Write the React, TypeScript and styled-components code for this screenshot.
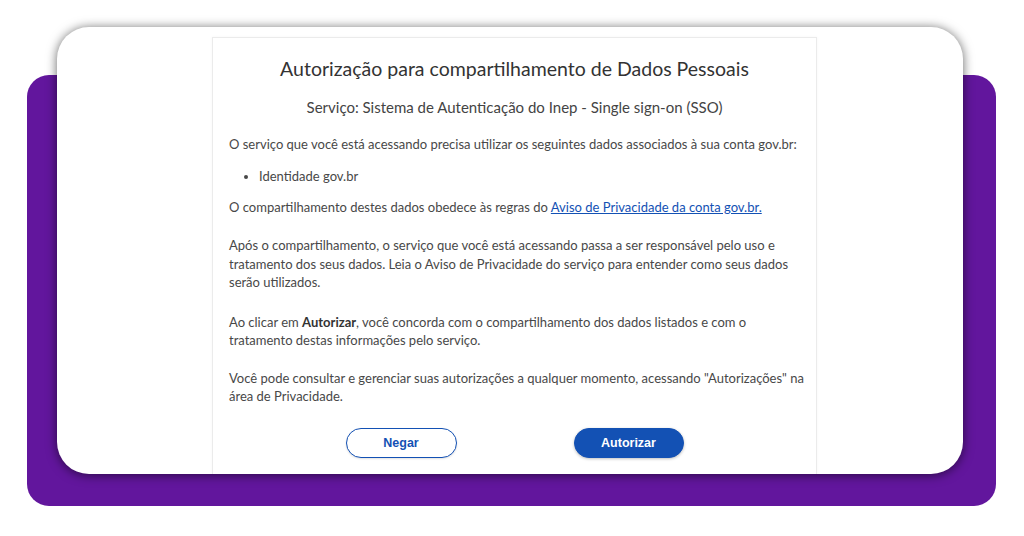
import React from "react";
import styled, { createGlobalStyle } from "styled-components";

const Global = createGlobalStyle`
  html, body { margin: 0; padding: 0; background: #ffffff; }
  body { font-family: "Lato", "Liberation Sans", sans-serif; }
  * { box-sizing: border-box; }
`;

const Frame = styled.div`
  position: relative;
  width: 1024px;
  height: 536px;
  padding: 27px 61px 0 57px;
  background: #ffffff;
  overflow: hidden;

  &::before {
    content: "";
    position: absolute;
    left: 27px;
    top: 75px;
    right: 28px;
    bottom: 30px;
    border-radius: 22px;
    background: #62169d;
  }
`;

const Card = styled.div`
  position: relative;
  z-index: 1;
  height: 447px;
  background: #ffffff;
  border-radius: 32px;
  overflow: hidden;
  box-shadow: 0 1px 11px rgba(0, 0, 0, 0.6);
  padding: 10px 0 0 155px;
`;

const Panel = styled.section`
  width: 605px;
  height: 100%;
  border: 1px solid #ebebeb;
  border-bottom: none;
  padding: 17px 10px 0 16px;
  font-family: "Lato", "Liberation Sans", sans-serif;
  color: #333333;
  box-shadow: 0 0 3px rgba(0, 0, 0, 0.04);
`;

const Title = styled.h1`
  margin: 0;
  padding-right: 6px;
  font-size: 19.5px;
  line-height: 28px;
  font-weight: 400;
  text-align: center;
  color: #333333;
`;

const Subtitle = styled.h2`
  margin: 13px 0 0 0;
  padding-right: 6px;
  font-size: 15px;
  line-height: 22px;
  font-weight: 400;
  text-align: center;
  color: #444444;
`;

const Para = styled.p<{ $gap: number }>`
  margin: ${(p) => p.$gap}px 0 0 0;
  font-size: 13px;
  line-height: 18.5px;
  color: #484848;
`;

const List = styled.ul`
  margin: 13px 0 0 0;
  padding: 0 0 0 30px;
  font-size: 13px;
  line-height: 18px;
  color: #484848;
  list-style: disc;
`;

const Link = styled.a`
  color: #1351b4;
  text-decoration: underline;
`;

const Strong = styled.strong`
  font-weight: 700;
  color: #333333;
`;

const Actions = styled.div`
  margin-top: 22px;
  padding-right: 6px;
  display: flex;
  justify-content: center;
  gap: 117px;
`;

const Button = styled.button<{ $primary?: boolean; $w: number }>`
  width: ${(p) => p.$w}px;
  height: 30px;
  border-radius: 15px;
  font-family: "Liberation Sans", Arial, sans-serif;
  font-weight: 700;
  font-size: 12.5px;
  cursor: pointer;
  border: 1px solid #1351b4;
  background: ${(p) => (p.$primary ? "#1351b4" : "#ffffff")};
  color: ${(p) => (p.$primary ? "#ffffff" : "#1351b4")};
  box-shadow: ${(p) => (p.$primary ? "0 1px 3px rgba(0,0,0,0.25)" : "0 1px 2px rgba(0,0,0,0.12)")};
`;

export default function App() {
  return (
    <>
      <Global />
      <Frame>
        <Card>
          <Panel>
            <Title>Autorização para compartilhamento de Dados Pessoais</Title>
            <Subtitle>Serviço: Sistema de Autenticação do Inep - Single sign-on (SSO)</Subtitle>
            <Para $gap={17}>
              O serviço que você está acessando precisa utilizar os seguintes dados associados à sua conta gov.br:
            </Para>
            <List>
              <li>Identidade gov.br</li>
            </List>
            <Para $gap={13}>
              O compartilhamento destes dados obedece às regras do{" "}
              <Link href="#">Aviso de Privacidade da conta gov.br.</Link>
            </Para>
            <Para $gap={20}>
              Após o compartilhamento, o serviço que você está acessando passa a ser responsável pelo uso e
              tratamento dos seus dados. Leia o Aviso de Privacidade do serviço para entender como seus dados
              serão utilizados.
            </Para>
            <Para $gap={21}>
              Ao clicar em <Strong>Autorizar</Strong>, você concorda com o compartilhamento dos dados listados e com o
              tratamento destas informações pelo serviço.
            </Para>
            <Para $gap={19}>
              Você pode consultar e gerenciar suas autorizações a qualquer momento, acessando "Autorizações" na
              área de Privacidade.
            </Para>
            <Actions>
              <Button $w={111}>Negar</Button>
              <Button $w={110} $primary>
                Autorizar
              </Button>
            </Actions>
          </Panel>
        </Card>
      </Frame>
    </>
  );
}
